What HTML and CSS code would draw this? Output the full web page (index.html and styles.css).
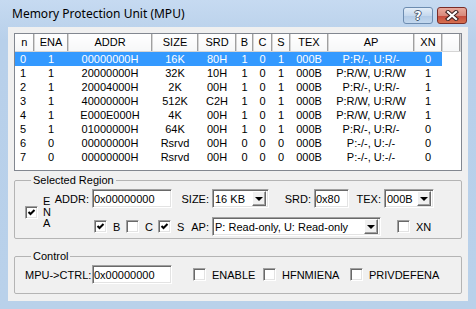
FILE: index.html
```html
<!DOCTYPE html>
<html lang="en">
<head>
    <meta charset="UTF-8">
    <meta name="viewport" content="width=device-width, initial-scale=1.0">
    <title>Memory Protection Unit (MPU)</title>
    <link rel="stylesheet" href="styles.css">
</head>
<body>
    <div class="window">
        <div class="titlebar">
            <span class="title">Memory Protection Unit (MPU)</span>
            <div class="caption-buttons">
                <div class="cap-btn help">?</div>
                <div class="cap-btn close">
                    <svg width="14" height="11" viewBox="0 0 14 11">
                        <path d="M3 2 L11 9 M11 2 L3 9" stroke="#3b1f1f" stroke-width="4.2" stroke-linecap="square"/>
                        <path d="M3 2 L11 9 M11 2 L3 9" stroke="#fff" stroke-width="2.2" stroke-linecap="square"/>
                    </svg>
                </div>
            </div>
        </div>

        <div class="client">
            <div class="listview">
                <table>
                    <colgroup>
                        <col style="width:19px"><col style="width:34px"><col style="width:84px">
                        <col style="width:46px"><col style="width:38px"><col style="width:17px">
                        <col style="width:19px"><col style="width:18px"><col style="width:38px">
                        <col style="width:86px"><col style="width:28px"><col>
                    </colgroup>
                    <thead>
                        <tr>
                            <th>n</th><th>ENA</th><th>ADDR</th><th>SIZE</th><th>SRD</th><th>B</th>
                            <th>C</th><th>S</th><th>TEX</th><th>AP</th><th>XN</th><th></th>
                        </tr>
                    </thead>
                    <tbody>
                        <tr class="selected"><td>0</td><td>1</td><td>00000000H</td><td>16K</td><td>80H</td><td>1</td><td>0</td><td>1</td><td>000B</td><td>P:R/-, U:R/-</td><td>0</td><td class="filler"></td></tr>
                        <tr><td>1</td><td>1</td><td>20000000H</td><td>32K</td><td>10H</td><td>1</td><td>0</td><td>1</td><td>000B</td><td>P:R/W, U:R/W</td><td>1</td><td class="filler"></td></tr>
                        <tr><td>2</td><td>1</td><td>20004000H</td><td>2K</td><td>00H</td><td>1</td><td>0</td><td>1</td><td>000B</td><td>P:R/-, U:R/-</td><td>1</td><td class="filler"></td></tr>
                        <tr><td>3</td><td>1</td><td>40000000H</td><td>512K</td><td>C2H</td><td>1</td><td>0</td><td>1</td><td>000B</td><td>P:R/W, U:R/W</td><td>1</td><td class="filler"></td></tr>
                        <tr><td>4</td><td>1</td><td>E000E000H</td><td>4K</td><td>00H</td><td>1</td><td>0</td><td>1</td><td>000B</td><td>P:R/W, U:R/W</td><td>1</td><td class="filler"></td></tr>
                        <tr><td>5</td><td>1</td><td>01000000H</td><td>64K</td><td>00H</td><td>1</td><td>0</td><td>1</td><td>000B</td><td>P:R/-, U:R/-</td><td>0</td><td class="filler"></td></tr>
                        <tr><td>6</td><td>0</td><td>00000000H</td><td>Rsrvd</td><td>00H</td><td>0</td><td>0</td><td>0</td><td>000B</td><td>P:-/-, U:-/-</td><td>0</td><td class="filler"></td></tr>
                        <tr><td>7</td><td>0</td><td>00000000H</td><td>Rsrvd</td><td>00H</td><td>0</td><td>0</td><td>0</td><td>000B</td><td>P:-/-, U:-/-</td><td>0</td><td class="filler"></td></tr>
                    </tbody>
                </table>
            </div>

            <fieldset class="group selected-region">
                <legend>Selected Region</legend>
                <div class="sel-body">
                    <div class="ena">
                        <span class="cb checked">
                            <svg width="11" height="11" viewBox="0 0 11 11"><path d="M2.5 5 L4.5 7 L8.5 3" fill="none" stroke="#000" stroke-width="2"/></svg>
                        </span>
                        <span class="ena-label">ENA</span>
                    </div>
                    <div class="sel-rows">
                        <div class="row">
                            <span class="lbl w-addr">ADDR:</span>
                            <input class="edit w-80" type="text" value="0x00000000" readonly>
                            <span class="lbl w-size">SIZE:</span>
                            <div class="combo w-57"><span class="val">16 KB</span><span class="drop"></span></div>
                            <span class="lbl w-srd">SRD:</span>
                            <input class="edit w-35" type="text" value="0x80" readonly>
                            <span class="lbl w-tex">TEX:</span>
                            <div class="combo w-50"><span class="val">000B</span><span class="drop"></span></div>
                        </div>
                        <div class="row">
                            <label class="check w-b"><span class="cb checked"><svg width="11" height="11" viewBox="0 0 11 11"><path d="M2.5 5 L4.5 7 L8.5 3" fill="none" stroke="#000" stroke-width="2"/></svg></span>B</label>
                            <label class="check w-c"><span class="cb"></span>C</label>
                            <label class="check w-s"><span class="cb checked"><svg width="11" height="11" viewBox="0 0 11 11"><path d="M2.5 5 L4.5 7 L8.5 3" fill="none" stroke="#000" stroke-width="2"/></svg></span>S</label>
                            <span class="lbl w-ap">AP:</span>
                            <div class="combo w-169"><span class="val">P: Read-only, U: Read-only</span><span class="drop"></span></div>
                            <label class="check w-xn"><span class="cb"></span>XN</label>
                        </div>
                    </div>
                </div>
            </fieldset>

            <fieldset class="group control">
                <legend>Control</legend>
                <div class="row">
                    <span class="lbl-left w-ctrl">MPU-&gt;CTRL:</span>
                    <input class="edit w-80" type="text" value="0x00000000" readonly>
                    <label class="check w-enable"><span class="cb"></span>ENABLE</label>
                    <label class="check w-hfn"><span class="cb"></span>HFNMIENA</label>
                    <label class="check"><span class="cb"></span>PRIVDEFENA</label>
                </div>
            </fieldset>
        </div>
    </div>
</body>
</html>
```

FILE: styles.css
```css
body {
    margin: 0;
    font-family: "Liberation Sans", Arial, sans-serif;
    font-size: 11px;
    color: #000;
    background: #fff;
}

.window {
    width: 476px;
    height: 309px;
    display: flex;
    flex-direction: column;
    background: linear-gradient(#c6daf1, #b8d0ea 40px, #b9d1ea);
    box-sizing: border-box;
}

/* title bar */
.titlebar {
    height: 27px;
    display: flex;
    align-items: flex-start;
    justify-content: space-between;
    flex-shrink: 0;
}
.title {
    font-family: "Noto Sans", sans-serif;
    font-size: 12px;
    margin: 6px 0 0 12px;
    line-height: 16px;
}
.caption-buttons {
    display: flex;
    gap: 4px;
    margin: 7px 9px 0 0;
}
.cap-btn {
    width: 30px;
    height: 17px;
    box-sizing: border-box;
    border-radius: 3px;
    display: flex;
    align-items: center;
    justify-content: center;
}
.help {
    border: 1px solid #6d8cb0;
    background: linear-gradient(#e3edf8, #c6d9ee 50%, #b2cae6 51%, #c3d8ee);
    color: #fff;
    font-family: "DejaVu Sans", sans-serif;
    font-weight: bold;
    font-size: 12px;
    text-shadow: -1px 0 #4a5a70, 1px 0 #4a5a70, 0 -1px #4a5a70, 0 1px #4a5a70;
}
.close {
    border: 1px solid #7a2d28;
    background: linear-gradient(#e9a99c, #d88a7c 50%, #c4483c 51%, #d6704f);
}

/* client area */
.client {
    flex: 1;
    margin: 0 8px 8px;
    padding: 6px 6px 0;
    background: #f0f0f0;
    display: flex;
    flex-direction: column;
}

/* list view */
.listview {
    height: 138px;
    box-sizing: border-box;
    border: 1px solid #828790;
    background: #fff;
    overflow: hidden;
}
.listview table {
    width: 100%;
    border-collapse: collapse;
    table-layout: fixed;
}
.listview th {
    height: 17px;
    padding: 0;
    font-weight: normal;
    text-align: center;
    background: linear-gradient(#fff, #f6f7f8);
    border-right: 1px solid #d5d5d5;
    border-bottom: 1px solid #d5d5d5;
    box-sizing: border-box;
    box-shadow: inset -1px 0 0 #a0a0a0;
}
.listview td {
    height: 14px;
    padding: 0;
    line-height: 14px;
    text-align: center;
    white-space: nowrap;
    overflow: hidden;
}
.listview td:first-child {
    text-align: left;
    padding-left: 5px;
}
.listview tr.selected td {
    background: #3399ff;
    color: #fff;
}
.listview tr.selected td.filler {
    background: #fff;
}

/* group boxes */
.group {
    margin: 3px 0 0;
    padding: 2px 10px 2px;
    border: 1px solid #b4b4b4;
    border-radius: 2px;
    min-width: 0;
}
.group legend {
    padding: 0 2px;
    margin-left: 6px;
    line-height: 13px;
}
.control {
    margin-top: 11px;
    padding-bottom: 9px;
}

.sel-body {
    display: flex;
    align-items: center;
}
.ena {
    display: flex;
    align-items: center;
    gap: 5px;
    width: 26px;
}
.ena-label {
    width: 8px;
    line-height: 11px;
    word-break: break-all;
}
.sel-rows {
    display: flex;
    flex-direction: column;
    gap: 9px;
}
.row {
    display: flex;
    align-items: center;
    height: 19px;
}

.lbl {
    text-align: right;
    padding-right: 3px;
    box-sizing: border-box;
}
.lbl-left {
    box-sizing: border-box;
}
.w-addr { width: 41px; }
.w-size { width: 40px; }
.w-srd { width: 45px; }
.w-tex { width: 35px; }
.w-ap { width: 28px; }
.w-ctrl { width: 67px; }

/* edit boxes */
.edit {
    height: 19px;
    box-sizing: border-box;
    margin: 0;
    padding: 0 1px;
    font-family: "Liberation Sans", Arial, sans-serif;
    font-size: 11px;
    color: #000;
    background: #fff;
    border: 1px solid;
    border-color: #a0a0a0 #fff #fff #a0a0a0;
    box-shadow: inset 1px 1px 0 #696969, inset -1px -1px 0 #e3e3e3;
    outline: none;
}
.w-80 { width: 80px; }
.w-35 { width: 35px; }

/* combo boxes */
.combo {
    height: 19px;
    box-sizing: border-box;
    display: flex;
    align-items: center;
    background: #fff;
    border: 1px solid;
    border-color: #a0a0a0 #fff #fff #a0a0a0;
    box-shadow: inset 1px 1px 0 #696969, inset -1px -1px 0 #e3e3e3;
    padding: 1px 2px 1px 2px;
}
.combo .val {
    flex: 1;
    white-space: nowrap;
    overflow: hidden;
}
.combo .drop {
    width: 14px;
    height: 15px;
    box-sizing: border-box;
    background: #f0f0f0;
    border: 1px solid;
    border-color: #fff #696969 #696969 #fff;
    box-shadow: inset -1px -1px 0 #a0a0a0;
    display: flex;
    align-items: center;
    justify-content: center;
}
.combo .drop::after {
    content: "";
    border-left: 4px solid transparent;
    border-right: 4px solid transparent;
    border-top: 4px solid #000;
    margin-top: 1px;
}
.w-57 { width: 57px; }
.w-50 { width: 50px; }
.w-169 { width: 169px; }

/* check boxes */
.check {
    display: flex;
    align-items: center;
    gap: 6px;
    box-sizing: border-box;
}
.cb {
    width: 13px;
    height: 13px;
    box-sizing: border-box;
    background: #fff;
    border: 1px solid;
    border-color: #a0a0a0 #fff #fff #a0a0a0;
    box-shadow: inset 1px 1px 0 #696969, inset -1px -1px 0 #e3e3e3;
    display: flex;
    align-items: center;
    justify-content: center;
    flex-shrink: 0;
}
.cb svg {
    display: block;
}
.w-b { margin-left: 43px; width: 32px; }
.w-c { width: 32px; }
.w-s { width: 26px; }
.w-xn { margin-left: 16px; }
.w-enable { margin-left: 21px; width: 70px; }
.w-hfn { width: 87px; }
```
